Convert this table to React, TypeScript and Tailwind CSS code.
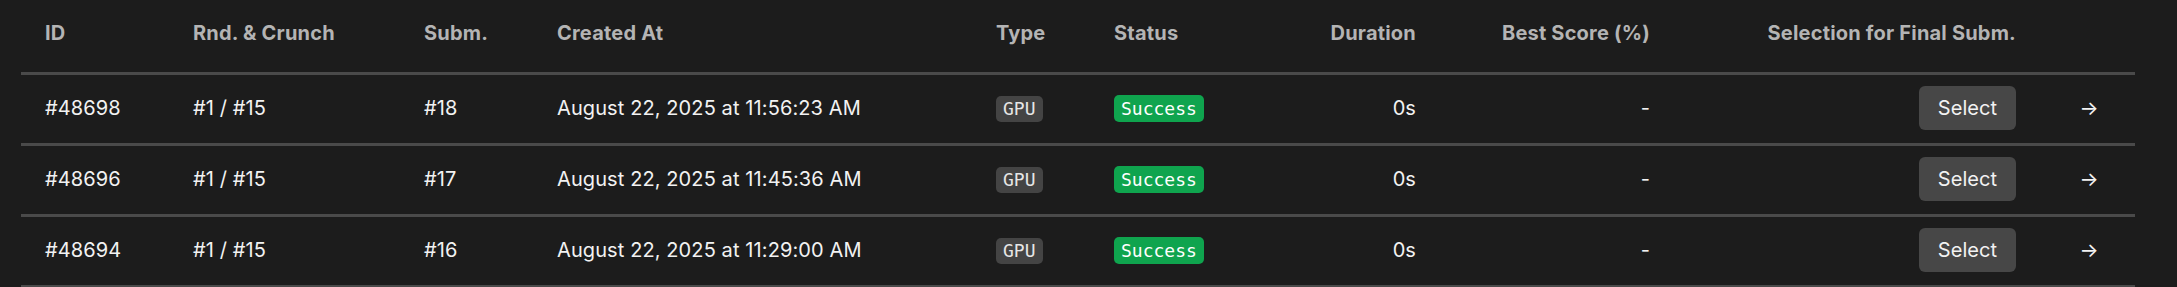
const cols = "grid grid-cols-[148px_231px_133px_439px_118px_169px_181px_234px_366px_95px]";

const rows = [
  { id: "#48698", sub: "#18", time: "11:56:23 AM" },
  { id: "#48696", sub: "#17", time: "11:45:36 AM" },
  { id: "#48694", sub: "#16", time: "11:29:00 AM" },
];

export default function App() {
  return (
    <div
      className="min-h-screen w-full bg-[#1c1c1c] pl-[21px] text-[20px]"
      style={{ fontFamily: "Inter, 'Liberation Sans', sans-serif" }}
    >
      <div className="w-[2114px]">
        {/* Header */}
        <div className={`${cols} h-[75px] items-center pb-[6px] border-b-[3px] border-[#4a4a4a] font-bold text-[#b4b4b4] tracking-[0.01em]`}>
          <div className="px-6">ID</div>
          <div className="px-6">Rnd. &amp; Crunch</div>
          <div className="px-6">Subm.</div>
          <div className="px-6">Created At</div>
          <div className="px-6">Type</div>
          <div className="px-6">Status</div>
          <div className="px-6 text-right">Duration</div>
          <div className="px-6 text-right">Best Score (%)</div>
          <div className="px-6 text-right">Selection for Final Subm.</div>
          <div />
        </div>

        {/* Rows */}
        {rows.map((r) => (
          <div key={r.id} className={`${cols} h-[71px] items-center pb-[2px] border-b-[3px] border-[#4a4a4a] text-[#f2f2f2] tracking-[0.005em]`}>
            <div className="px-6">{r.id}</div>
            <div className="px-6">#1 / #15</div>
            <div className="px-6">{r.sub}</div>
            <div className="px-6">August 22, 2025 at {r.time}</div>
            <div className="px-6">
              <span
                className="inline-block rounded-[5px] bg-[#444444] px-[7px] py-[2px] text-[18px] leading-[22px] tracking-normal text-[#e6e6e6]"
                style={{ fontFamily: "'DejaVu Sans Mono', monospace" }}
              >
                GPU
              </span>
            </div>
            <div className="px-6">
              <span
                className="inline-block rounded-[5px] bg-[#0fa44e] px-[7px] py-[2px] text-[18px] leading-[23px] tracking-normal text-white"
                style={{ fontFamily: "'DejaVu Sans Mono', monospace" }}
              >
                Success
              </span>
            </div>
            <div className="px-6 text-right">0s</div>
            <div className="px-6 text-right">-</div>
            <div className="px-6 flex justify-end">
              <button className="h-[44px] w-[97px] rounded-[6px] bg-[#474747] text-[#f2f2f2]">Select</button>
            </div>
            <div className="flex justify-center pl-[3px]">→</div>
          </div>
        ))}
      </div>
    </div>
  );
}
